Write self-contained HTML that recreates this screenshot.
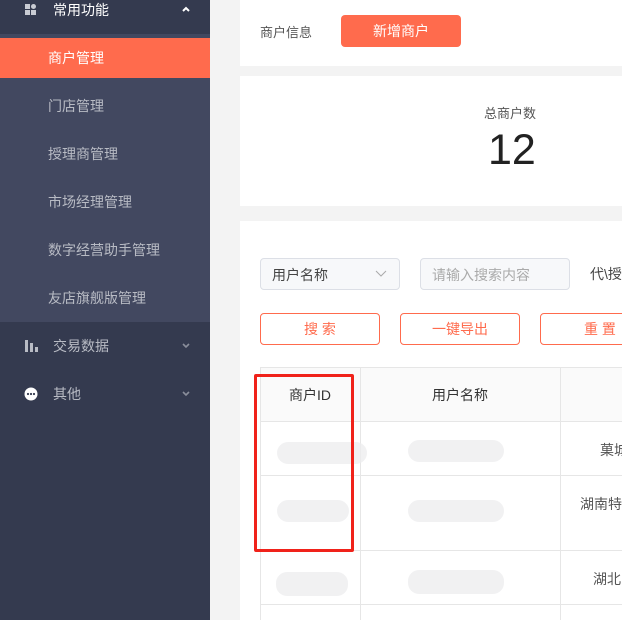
<!DOCTYPE html>
<html><head><meta charset="utf-8"><style>
*{margin:0;padding:0;box-sizing:border-box}
body{width:622px;height:620px;overflow:hidden;background:#f3f3f3;font-family:"Liberation Sans","Noto Sans CJK SC",sans-serif;position:relative}
.side{position:absolute;left:0;top:0;width:210px;height:620px;background:#343a4f}
.sub{position:absolute;left:0;top:34px;width:210px;height:288px;background:#424860}
.it{position:absolute;left:48px;font-size:14px;color:#b8bbc4}
.grp{position:absolute;left:53px;font-size:14px;color:#e0e2e8}
.act{position:absolute;left:0;top:38px;width:210px;height:40px;background:#ff6b4d}
.chev{position:absolute;left:182px}
.card{position:absolute;left:240px;width:382px;background:#fff}
.btn{position:absolute;border:1px solid #ff6b4d;border-radius:4px;color:#ff6b4d;font-size:14px;text-align:center;line-height:30px;height:32px}
.blur{position:absolute;background:#ececee;border-radius:11px;opacity:.75}
.vl{position:absolute;width:1px;background:#e6e6e6}
.hl{position:absolute;height:1px;background:#e6e6e6;left:260px;width:362px}
</style></head><body>
<div class="side">
<div class="sub"></div>
<div style="position:absolute;left:25px;top:4px;width:5px;height:5px;background:#c9ccd4"></div>
<div style="position:absolute;left:31px;top:4px;width:5px;height:5px;background:#c9ccd4;border-radius:50%"></div>
<div style="position:absolute;left:25px;top:10px;width:5px;height:5px;background:#c9ccd4"></div>
<div style="position:absolute;left:31px;top:10px;width:5px;height:5px;background:#c9ccd4"></div>
<div class="grp" style="top:0px;color:#fff">常用功能</div>
<svg class="chev" style="top:6px" width="8" height="6"><path d="M1 5L4 2L7 5" stroke="#fff" stroke-width="2" fill="none"/></svg>
<div class="act"></div>
<div class="it" style="top:48px;color:#fff">商户管理</div>
<div class="it" style="top:96px">门店管理</div>
<div class="it" style="top:144px">授理商管理</div>
<div class="it" style="top:192px">市场经理管理</div>
<div class="it" style="top:240px">数字经营助手管理</div>
<div class="it" style="top:288px">友店旗舰版管理</div>
<div style="position:absolute;left:25px;top:340px;width:3px;height:12px;background:#b8bbc4"></div>
<div style="position:absolute;left:30px;top:343px;width:3px;height:9px;background:#b8bbc4"></div>
<div style="position:absolute;left:35px;top:347px;width:3px;height:5px;background:#b8bbc4"></div>
<div class="grp" style="top:336px;color:#b8bbc4">交易数据</div>
<svg class="chev" style="top:343px" width="8" height="6"><path d="M1 1L4 4L7 1" stroke="#8a8e9b" stroke-width="1.6" fill="none"/></svg>
<svg style="position:absolute;left:24px;top:387px" width="14" height="14"><circle cx="7" cy="7" r="6.5" fill="#fff"/><circle cx="4" cy="7" r="1.1" fill="#343a4f"/><circle cx="7" cy="7" r="1.1" fill="#343a4f"/><circle cx="10" cy="7" r="1.1" fill="#343a4f"/></svg>
<div class="grp" style="top:384px;color:#b8bbc4">其他</div>
<svg class="chev" style="top:391px" width="8" height="6"><path d="M1 1L4 4L7 1" stroke="#8a8e9b" stroke-width="1.6" fill="none"/></svg>
</div>

<div class="card" style="top:0;height:66px">
<div style="position:absolute;left:20px;top:22px;font-size:13px;color:#555">商户信息</div>
<div style="position:absolute;left:101px;top:15px;width:120px;height:32px;background:#ff6b4d;border-radius:4px;color:#fff;font-size:14px;text-align:center;line-height:32px">新增商户</div>
</div>
<div class="card" style="top:76px;height:130px">
<div style="position:absolute;left:244px;top:27px;font-size:13px;color:#555">总商户数</div>
<div style="position:absolute;left:248px;top:50px;font-size:43px;color:#222">12</div>
</div>
<div class="card" style="top:221px;height:399px"></div>

<div style="position:absolute;left:260px;top:258px;width:140px;height:32px;border:1px solid #dcdfe6;border-radius:4px;background:#f7f8fa;font-size:14px;color:#444;padding:6px 11px">用户名称<svg style="position:absolute;right:12px;top:11px" width="12" height="8"><path d="M1 1L6 6L11 1" stroke="#aaa" stroke-width="1" fill="none"/></svg></div>
<div style="position:absolute;left:420px;top:258px;width:150px;height:32px;border:1px solid #dcdfe6;border-radius:4px;background:#f7f8fa;font-size:14px;color:#aaa;padding:6px 11px">请输入搜索内容</div>
<div style="position:absolute;left:590px;top:264px;font-size:14px;color:#444;white-space:nowrap">代\授</div>
<div class="btn" style="left:260px;top:313px;width:120px">搜 索</div>
<div class="btn" style="left:400px;top:313px;width:120px">一键导出</div>
<div class="btn" style="left:540px;top:313px;width:120px">重 置</div>

<div style="position:absolute;left:260px;top:367px;width:362px;height:54px;background:#fafafa"></div>
<div class="hl" style="top:367px"></div>
<div class="hl" style="top:421px"></div>
<div class="hl" style="top:475px"></div>
<div class="hl" style="top:550px"></div>
<div class="hl" style="top:604px"></div>
<div class="vl" style="left:260px;top:367px;height:253px"></div>
<div class="vl" style="left:360px;top:367px;height:253px"></div>
<div class="vl" style="left:560px;top:367px;height:253px"></div>
<div style="position:absolute;left:289px;top:385px;font-size:14px;color:#333">商户ID</div>
<div style="position:absolute;left:432px;top:385px;font-size:14px;color:#333">用户名称</div>
<div style="position:absolute;left:600px;top:440px;font-size:14px;color:#555;white-space:nowrap">菓城</div>
<div style="position:absolute;left:580px;top:494px;font-size:14px;color:#555;white-space:nowrap">湖南特</div>
<div style="position:absolute;left:593px;top:569px;font-size:14px;color:#555;white-space:nowrap">湖北</div>
<div class="blur" style="left:277px;top:442px;width:90px;height:22px"></div>
<div class="blur" style="left:408px;top:440px;width:96px;height:22px"></div>
<div class="blur" style="left:277px;top:500px;width:72px;height:22px"></div>
<div class="blur" style="left:408px;top:500px;width:96px;height:22px"></div>
<div class="blur" style="left:276px;top:572px;width:72px;height:24px"></div>
<div class="blur" style="left:408px;top:570px;width:96px;height:24px"></div>
<div style="position:absolute;left:254px;top:374px;width:100px;height:178px;border:3px solid #f0221a;border-radius:2px"></div>
</body></html>
